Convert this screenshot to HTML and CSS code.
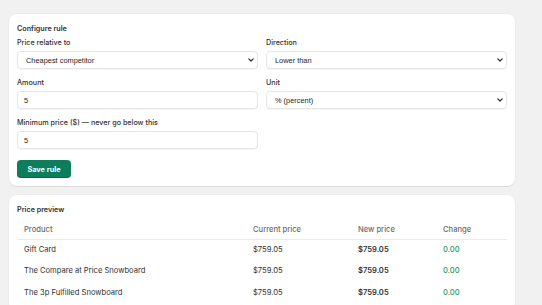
FILE: index.html
```html
<!DOCTYPE html>
<html lang="en">
<head>
<meta charset="utf-8">
<title>Configure rule</title>
<link rel="stylesheet" href="styles.css">
</head>
<body>
<main class="page">
  <section class="card">
    <h2 class="card-title">Configure rule</h2>
    <div class="form-grid">
      <label class="field">
        <span class="field-label">Price relative to</span>
        <span class="select-wrap">
          <select class="control select"><option>Cheapest competitor</option></select>
          <svg class="chevron" width="6" height="4" viewBox="0 0 6 4"><path d="M0.8 0.8 L3 3 L5.2 0.8" fill="none" stroke="#303030" stroke-width="1.2" stroke-linecap="round" stroke-linejoin="round"/></svg>
        </span>
      </label>
      <label class="field">
        <span class="field-label">Direction</span>
        <span class="select-wrap">
          <select class="control select"><option>Lower than</option></select>
          <svg class="chevron" width="6" height="4" viewBox="0 0 6 4"><path d="M0.8 0.8 L3 3 L5.2 0.8" fill="none" stroke="#303030" stroke-width="1.2" stroke-linecap="round" stroke-linejoin="round"/></svg>
        </span>
      </label>
      <label class="field">
        <span class="field-label">Amount</span>
        <input class="control input" type="text" value="5">
      </label>
      <label class="field">
        <span class="field-label">Unit</span>
        <span class="select-wrap">
          <select class="control select"><option>% (percent)</option></select>
          <svg class="chevron" width="6" height="4" viewBox="0 0 6 4"><path d="M0.8 0.8 L3 3 L5.2 0.8" fill="none" stroke="#303030" stroke-width="1.2" stroke-linecap="round" stroke-linejoin="round"/></svg>
        </span>
      </label>
      <label class="field">
        <span class="field-label">Minimum price ($) — never go below this</span>
        <input class="control input" type="text" value="5">
      </label>
    </div>
    <button class="btn-primary" type="button">Save rule</button>
  </section>

  <section class="card card-preview">
    <h2 class="card-title">Price preview</h2>
    <table class="preview-table">
      <colgroup>
        <col class="col-product">
        <col class="col-current">
        <col class="col-new">
        <col class="col-change">
      </colgroup>
      <thead>
        <tr><th>Product</th><th>Current price</th><th>New price</th><th>Change</th></tr>
      </thead>
      <tbody>
        <tr><td>Gift Card</td><td>$759.05</td><td class="strong">$759.05</td><td class="change">0.00</td></tr>
        <tr><td>The Compare at Price Snowboard</td><td>$759.05</td><td class="strong">$759.05</td><td class="change">0.00</td></tr>
        <tr><td>The 3p Fulfilled Snowboard</td><td>$759.05</td><td class="strong">$759.05</td><td class="change">0.00</td></tr>
      </tbody>
    </table>
  </section>
</main>
</body>
</html>
```

FILE: styles.css
```css
* { box-sizing: border-box; }

html, body {
  margin: 0;
  padding: 0;
  background: #f1f1f1;
  font-family: Inter, "Noto Sans", "Liberation Sans", sans-serif;
  color: #303030;
}

.page {
  width: 506px;
  margin-left: 9px;
  padding-top: 14px;
  display: flex;
  flex-direction: column;
  gap: 9px;
}

.card {
  background: #ffffff;
  border-radius: 8px;
  box-shadow: 0 1px 0 rgba(0, 0, 0, 0.07), 0 0 0 1px rgba(0, 0, 0, 0.02);
  padding: 10px 8px 8px;
  display: flex;
  flex-direction: column;
  align-items: flex-start;
}

.card-title {
  margin: 0;
  font-size: 7.2px;
  line-height: 10px;
  font-weight: 600;
  color: #303030;
}

.form-grid {
  margin-top: 3px;
  width: 100%;
  display: grid;
  grid-template-columns: 1fr 1fr;
  column-gap: 8px;
  row-gap: 8px;
}

.field {
  display: flex;
  flex-direction: column;
  gap: 2px;
}

.field-label {
  font-size: 7.2px;
  line-height: 12px;
  font-weight: 500;
  color: #303030;
}

.select-wrap {
  position: relative;
  display: block;
}

.control {
  display: block;
  width: 100%;
  height: 18px;
  margin: 0;
  border: 1px solid #e6e6e6;
  border-radius: 4px;
  background: #ffffff;
  box-shadow: 0 1px 0 rgba(0, 0, 0, 0.04);
  font-family: "Liberation Sans", Arial, sans-serif;
  font-size: 7.4px;
  color: #1e1e1e;
  outline: none;
}

.select {
  appearance: none;
  -webkit-appearance: none;
  padding: 0 16px 0 8px;
}

.input {
  padding: 0 6px;
}

.chevron {
  position: absolute;
  right: 4px;
  top: 7px;
}

.btn-primary {
  margin-top: 11px;
  height: 18px;
  width: 54px;
  padding: 0;
  border: none;
  border-radius: 4px;
  background: #0e7d5b;
  box-shadow: inset 0 -1px 0 rgba(0, 0, 0, 0.2);
  color: #ffffff;
  font-family: Inter, "Noto Sans", sans-serif;
  font-size: 7.3px;
  font-weight: 700;
}

.preview-table {
  margin-top: 5px;
  width: 490px;
  border-collapse: collapse;
  table-layout: fixed;
  font-size: 7.6px;
}

.col-product { width: 229px; }
.col-current { width: 105px; }
.col-new { width: 85px; }
.col-change { width: 71px; }

.preview-table th {
  height: 19px;
  padding: 0 0 0 7px;
  text-align: left;
  font-weight: 500;
  color: #6b6b6b;
  border-bottom: 1px solid #ebebeb;
}

.preview-table td {
  height: 21.3px;
  padding: 0 0 0 7px;
  color: #303030;
  font-weight: 400;
}

.preview-table td.strong {
  font-weight: 600;
}

.preview-table td.change {
  color: #1f9a66;
  font-weight: 500;
}
```
